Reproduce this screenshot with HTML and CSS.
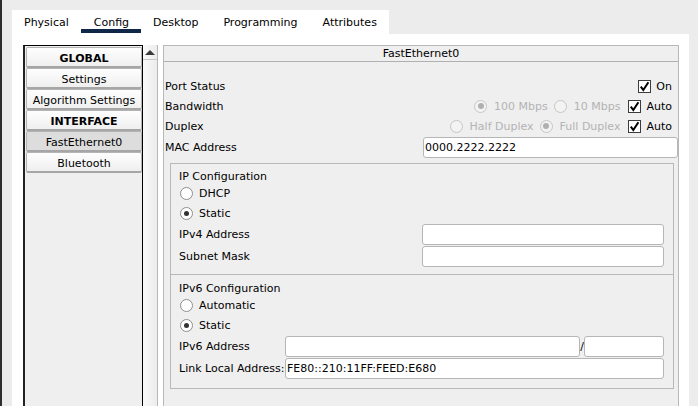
FILE: index.html
```html
<!DOCTYPE html>
<html>
<head>
<meta charset="utf-8">
<link rel="stylesheet" href="styles.css">
</head>
<body>
<div class="app">
  <div class="tabs">
    <div class="tab">Physical</div>
    <div class="tab active">Config</div>
    <div class="tab">Desktop</div>
    <div class="tab">Programming</div>
    <div class="tab">Attributes</div>
  </div>
  <div class="content">
    <div class="sidebar">
      <div class="list">
        <div class="item bold">GLOBAL</div>
        <div class="item">Settings</div>
        <div class="item">Algorithm Settings</div>
        <div class="item bold">INTERFACE</div>
        <div class="item pressed">FastEthernet0</div>
        <div class="item">Bluetooth</div>
      </div>
      <div class="scroll"><div class="arrow"><span class="tri"></span></div></div>
    </div>
    <div class="panel">
      <div class="ph">FastEthernet0</div>
      <div class="rows">
        <div class="row">
          <span class="lbl">Port Status</span>
          <span class="ctrls"><span class="cb"><svg width="11" height="11" viewBox="0 0 11 11"><path d="M1.8 5.6 L4.3 9 L9.4 1.2" fill="none" stroke="#000" stroke-width="2"/></svg></span><span class="cbt">On</span></span>
        </div>
        <div class="row">
          <span class="lbl">Bandwidth</span>
          <span class="ctrls">
            <span class="opt dis"><span class="rd on"></span>100 Mbps</span>
            <span class="opt dis"><span class="rd"></span>10 Mbps</span>
            <span class="cb"><svg width="11" height="11" viewBox="0 0 11 11"><path d="M1.8 5.6 L4.3 9 L9.4 1.2" fill="none" stroke="#000" stroke-width="2"/></svg></span><span class="cbt">Auto</span>
          </span>
        </div>
        <div class="row">
          <span class="lbl">Duplex</span>
          <span class="ctrls">
            <span class="opt dis"><span class="rd"></span>Half Duplex</span>
            <span class="opt dis"><span class="rd on"></span>Full Duplex</span>
            <span class="cb"><svg width="11" height="11" viewBox="0 0 11 11"><path d="M1.8 5.6 L4.3 9 L9.4 1.2" fill="none" stroke="#000" stroke-width="2"/></svg></span><span class="cbt">Auto</span>
          </span>
        </div>
        <div class="row mac">
          <span class="lbl">MAC Address</span>
          <span class="inp macinp">0000.2222.2222</span>
        </div>
      </div>
      <div class="group g4">
        <div class="gt">IP Configuration</div>
        <div class="ropt"><span class="rd"></span>DHCP</div>
        <div class="ropt"><span class="rd on"></span>Static</div>
        <div class="frow"><span class="flbl">IPv4 Address</span><span class="inp w242"></span></div>
        <div class="frow"><span class="flbl">Subnet Mask</span><span class="inp w242"></span></div>
      </div>
      <div class="group g6">
        <div class="gt">IPv6 Configuration</div>
        <div class="ropt"><span class="rd"></span>Automatic</div>
        <div class="ropt"><span class="rd on"></span>Static</div>
        <div class="frow"><span class="flbl6">IPv6 Address</span><span class="inp grow"></span><span class="slash">/</span><span class="inp w80"></span></div>
        <div class="frow"><span class="flbl6">Link Local Address:</span><span class="inp grow">FE80::210:11FF:FEED:E680</span></div>
      </div>
    </div>
  </div>
</div>
</body>
</html>
```

FILE: styles.css
```css
html, body {
  margin: 0;
  padding: 0;
  height: 100%;
}
body {
  background: #ececec;
  border-left: 2px solid #2e2e2e;
  box-sizing: border-box;
  font-family: "DejaVu Sans", sans-serif;
  font-size: 11px;
  color: #000;
  overflow: hidden;
}
.app {
  height: 100%;
  box-sizing: border-box;
  padding: 10px 9px 0 10px;
  display: flex;
  flex-direction: column;
}
.tabs {
  width: 377px;
  height: 24px;
  background: #fff;
  display: flex;
}
.tab {
  padding: 1px 13px 0 12px;
  height: 23px;
  line-height: 23px;
  position: relative;
  white-space: nowrap;
}
.tab:first-child { padding-left: 12px; padding-right: 12px; }
.tab.active { padding-left: 13px; padding-right: 12px; }
.tab.active::after {
  content: "";
  position: absolute;
  left: 0;
  right: 0;
  bottom: 1px;
  height: 4px;
  background: #0f2847;
}
.content {
  flex: 1;
  background: #fff;
  display: flex;
  padding: 11px 10px 0 11px;
  min-height: 0;
}
.sidebar {
  display: flex;
  width: 135px;
  flex: none;
  margin-right: 5px;
}
.list {
  width: 120px;
  box-sizing: border-box;
  border: 1px solid #000;
  border-left: 2px solid #222;
  border-bottom: none;
  background: #efefef;
  padding: 1px 0 0 1px;
}
.item {
  height: 21px;
  box-sizing: border-box;
  border: 1px solid #b4b4b4;
  border-bottom: 2px solid #a6a6a6;
  border-radius: 2px;
  background: linear-gradient(#fefefe, #efefef);
  text-align: center;
  padding-top: 2px;
  line-height: 17px;
  white-space: nowrap;
}
.item.bold { font-weight: bold; }
.item.pressed { background: #dddddd; }
.scroll {
  width: 15px;
  box-sizing: border-box;
  border-right: 1px solid #b8b8b8;
  background: linear-gradient(to right, #fafafa, #ececec);
}
.arrow {
  height: 15px;
  box-sizing: border-box;
  border-bottom: 1px solid #c8c8c8;
  display: flex;
  justify-content: center;
  padding-top: 5px;
}
.tri {
  width: 0;
  height: 0;
  border-left: 5px solid transparent;
  border-right: 5px solid transparent;
  border-bottom: 5px solid #3a3a3a;
}
.panel {
  flex: 1;
  background: #efefef;
  border: 1px solid #b8b8b8;
  border-bottom: none;
  display: flex;
  flex-direction: column;
}
.ph {
  height: 15px;
  line-height: 15px;
  text-align: center;
  border-bottom: 1px solid #b0b0b0;
}
.rows {
  padding-top: 14px;
}
.row {
  height: 20px;
  display: flex;
  align-items: center;
  justify-content: space-between;
  padding-left: 1px;
}
.row.mac {
  height: 22px;
}
.ctrls {
  display: flex;
  align-items: center;
  margin-right: 6px;
}
.opt {
  display: flex;
  align-items: center;
  margin-left: 6px;
}
.opt.dis { color: #b3b3b3; }
.rd {
  width: 13px;
  height: 13px;
  box-sizing: border-box;
  border-radius: 50%;
  border: 1px solid #8e8e8e;
  background: #fff;
  margin-right: 7px;
  display: flex;
  align-items: center;
  justify-content: center;
  flex: none;
}
.rd.on::after {
  content: "";
  width: 5px;
  height: 5px;
  border-radius: 50%;
  background: #333;
}
.dis .rd {
  border-color: #c6c6c6;
  background: #f3f3f3;
}
.dis .rd.on::after { background: #b0b0b0; width: 6px; height: 6px; }
.cb {
  width: 13px;
  height: 13px;
  box-sizing: border-box;
  border: 1px solid #3c3c3c;
  background: #fff;
  margin-left: 8px;
  display: flex;
  align-items: center;
  justify-content: center;
}
.cb svg { display: block; }
.cbt { margin-left: 5px; }
.inp {
  height: 21px;
  box-sizing: border-box;
  background: #fff;
  border: 1px solid #b6b6b6;
  border-radius: 3px;
  padding-left: 1px;
  line-height: 19px;
  white-space: nowrap;
}
.macinp { width: 255px; }
.group {
  border: 1px solid #b8b8b8;
  margin: 0 4px 0 6px;
  padding-left: 8px;
  padding-right: 9px;
}
.g4 {
  margin-top: 5px;
  padding-top: 6px;
  padding-bottom: 7px;
  border-bottom: none;
}
.g6 {
  padding-top: 7px;
  padding-bottom: 9px;
}
.gt {
  height: 13px;
  line-height: 13px;
}
.ropt {
  height: 20px;
  display: flex;
  align-items: center;
  padding-left: 1px;
}
.ropt .rd { margin-right: 6px; }
.frow {
  height: 22px;
  display: flex;
  align-items: center;
}
.flbl { flex: 1; }
.w242 { width: 242px; }
.flbl6 { width: 106px; flex: none; white-space: nowrap; }
.grow { flex: 1; }
.slash { width: 4px; text-align: center; flex: none; }
.w80 { width: 80px; flex: none; }
```
